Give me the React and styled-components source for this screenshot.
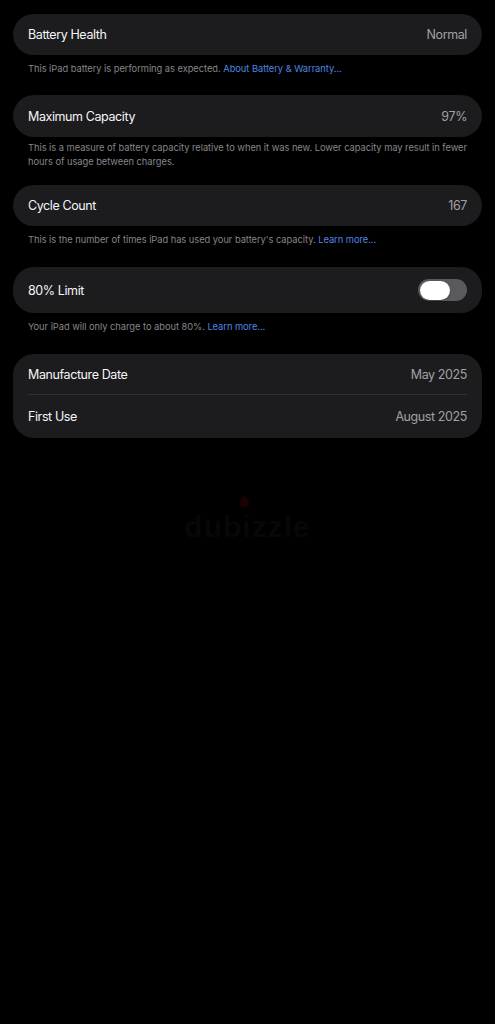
import React, { useState } from 'react';
import styled, { createGlobalStyle } from 'styled-components';

const GlobalStyle = createGlobalStyle`
  html, body {
    margin: 0;
    padding: 0;
    background: #000;
  }
  body {
    font-family: Inter, "Noto Sans", "Liberation Sans", sans-serif;
    -webkit-font-smoothing: antialiased;
  }
`;

const Page = styled.main`
  min-height: 1024px;
  background: #000;
  padding: 14px 13px 0 13px;
  box-sizing: border-box;
  display: flex;
  flex-direction: column;
`;

const Section = styled.section`
  display: flex;
  flex-direction: column;
  margin-bottom: ${({ gap }) => gap}px;
`;

const Card = styled.div`
  background: #1c1c1e;
  border-radius: 21px;
  padding: 0 15px;
  display: flex;
  flex-direction: column;
`;

const Row = styled.div`
  display: flex;
  align-items: center;
  justify-content: space-between;
  height: ${({ h }) => h || 41}px;
  border-bottom: ${({ divider }) => (divider ? '1px solid #323235' : 'none')};
`;

const Label = styled.span`
  color: #f5f5f7;
  font-size: 12.5px;
  letter-spacing: -0.4px;
`;

const Value = styled.span`
  color: #a0a0a5;
  font-size: 12.5px;
  letter-spacing: -0.4px;
`;

const Footer = styled.p`
  margin: 0;
  padding: ${({ top }) => top ?? 7}px 12px 0 15px;
  color: #86868b;
  font-size: 9.3px;
  line-height: 14px;
  letter-spacing: -0.03px;
`;

const Link = styled.a`
  color: #4f86e0;
  text-decoration: none;
  cursor: pointer;
`;

const Track = styled.button`
  width: 49px;
  height: 22px;
  border-radius: 11px;
  border: none;
  padding: 0 0 0 1.5px;
  background: ${({ on }) => (on ? '#30d158' : '#5a5a5e')};
  display: flex;
  align-items: center;
  justify-content: ${({ on }) => (on ? 'flex-end' : 'flex-start')};
  cursor: pointer;
`;

const Knob = styled.span`
  width: 30px;
  height: 19px;
  border-radius: 10px;
  background: #fff;
  box-shadow: 0 1px 2px rgba(0, 0, 0, 0.3);
`;

const Watermark = styled.div`
  align-self: center;
  margin-top: 58px;
  display: flex;
  flex-direction: column;
  align-items: center;
  gap: 2px;
  color: #070707;
  font-family: "Liberation Sans", sans-serif;
  font-weight: 700;
  font-size: 30px;
  letter-spacing: 1px;
`;

const Dot = styled.span`
  width: 9px;
  height: 12px;
  border-radius: 50% 50% 50% 50% / 60% 60% 40% 40%;
  background: #170103;
  margin-left: -6px;
`;

export default function App() {
  const [limit, setLimit] = useState(false);

  return (
    <>
      <GlobalStyle />
      <Page>
        <Section gap={19}>
          <Card>
            <Row>
              <Label>Battery Health</Label>
              <Value>Normal</Value>
            </Row>
          </Card>
          <Footer>
            This iPad battery is performing as expected. <Link>About Battery &amp; Warranty...</Link>
          </Footer>
        </Section>

        <Section gap={16}>
          <Card>
            <Row h={42}>
              <Label>Maximum Capacity</Label>
              <Value>97%</Value>
            </Row>
          </Card>
          <Footer top={4}>
            This is a measure of battery capacity relative to when it was new. Lower capacity may result in fewer
            hours of usage between charges.
          </Footer>
        </Section>

        <Section gap={20}>
          <Card>
            <Row>
              <Label>Cycle Count</Label>
              <Value>167</Value>
            </Row>
          </Card>
          <Footer>
            This is the number of times iPad has used your battery's capacity. <Link>Learn more...</Link>
          </Footer>
        </Section>

        <Section gap={20}>
          <Card>
            <Row h={46}>
              <Label>80% Limit</Label>
              <Track on={limit} onClick={() => setLimit(!limit)}>
                <Knob />
              </Track>
            </Row>
          </Card>
          <Footer>
            Your iPad will only charge to about 80%. <Link>Learn more...</Link>
          </Footer>
        </Section>

        <Section gap={0}>
          <Card>
            <Row h={40} divider>
              <Label>Manufacture Date</Label>
              <Value>May 2025</Value>
            </Row>
            <Row h={43}>
              <Label>First Use</Label>
              <Value>August 2025</Value>
            </Row>
          </Card>
        </Section>

        <Watermark>
          <Dot />
          dubizzle
        </Watermark>
      </Page>
    </>
  );
}
